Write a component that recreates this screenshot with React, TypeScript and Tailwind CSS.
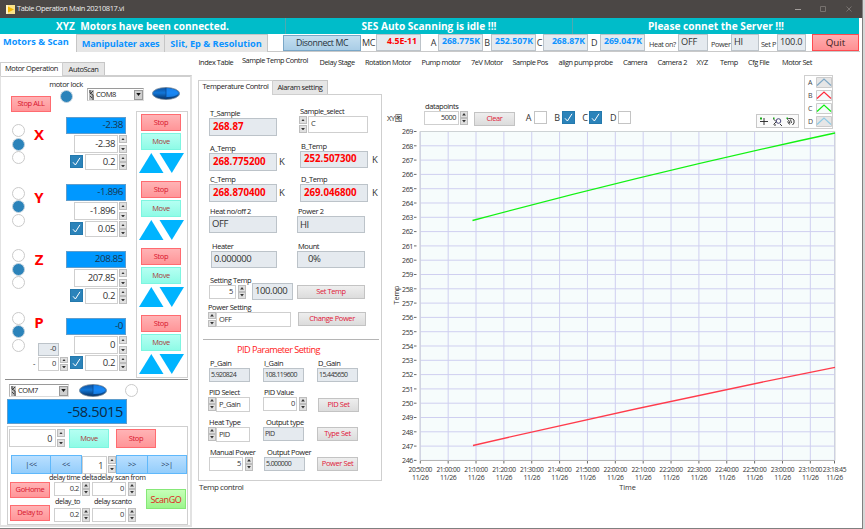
import type { ReactNode } from "react";
import clsx from "clsx";

const menu = [
  { name: "Index Table", w: "w-[43.5px]" },
  { name: "Sample Temp Control", w: "w-[77.5px] -mt-0.5" },
  { name: "Delay Stage", w: "w-[45.5px]" },
  { name: "Rotation Motor", w: "w-[56.5px]" },
  { name: "Pump motor", w: "w-[49.5px]" },
  { name: "7eV Motor", w: "w-[41.5px]" },
  { name: "Sample Pos", w: "w-[46px]" },
  { name: "align pump probe", w: "w-[64.5px]" },
  { name: "Camera", w: "w-[34.5px]" },
  { name: "Camera 2", w: "w-[39px]" },
  { name: "XYZ", w: "w-[23.5px]" },
  { name: "Temp", w: "w-[28px]" },
  { name: "Cfg File", w: "w-[34px]" },
  { name: "Motor Set", w: "w-[34px]" },
];

const axes = [
  { name: "X", pos: "-2.38", target: "-2.38", step: "0.2" },
  { name: "Y", pos: "-1.896", target: "-1.896", step: "0.05" },
  { name: "Z", pos: "208.85", target: "207.85", step: "0.2" },
  { name: "P", pos: "-0", target: "0", step: "0.2" },
];

const times = [
  "20:50:00", "21:00:00", "21:10:00", "21:20:00", "21:30:00", "21:40:00", "21:50:00", "22:00:00",
  "22:10:00", "22:20:00", "22:30:00", "22:40:00", "22:50:00", "23:00:00", "23:10:00",
];

const tones = {
  red: "border-[#ff6b70] bg-linear-to-b from-[#ffb3b5] to-[#ff9598] text-[#d8142c]",
  mint: "border-[#7df5e0] bg-linear-to-b from-[#b4fff2] to-[#8efbe6] text-[#a83a3a]",
  gray: "border-[#c3c3c3] bg-linear-to-b from-[#eeeeee] to-[#dcdcdc] text-[#e01838]",
  blue: "border-[#5fb8fb] bg-linear-to-b from-[#b9dfff] to-[#93cdfb] text-[#1d3557]",
  green: "border-[#86e878] bg-linear-to-b from-[#c6ffb8] to-[#9cf58c] text-[#e02020]",
};

function Btn({ tone, className, children }: { tone: keyof typeof tones; className?: string; children: ReactNode }) {
  return (
    <button className={clsx("flex items-center justify-center border text-[7.5px] leading-none", tones[tone], className)}>
      {children}
    </button>
  );
}

function Spinner({ className }: { className?: string }) {
  return (
    <div className={clsx("flex w-2 flex-col justify-between", className)}>
      {["M0 4 3 0 6 4Z", "M0 0 3 4 6 0Z"].map((d) => (
        <div key={d} className="flex h-[47%] items-center justify-center border border-[#bdbdbd] bg-[#e0e0e0]">
          <svg viewBox="0 0 6 4" className="h-[2.5px] w-1">
            <path d={d} fill="#333" />
          </svg>
        </div>
      ))}
    </div>
  );
}

// editable value
function Input({ className, children }: { className?: string; children: ReactNode }) {
  return (
    <div className={clsx("flex items-center border border-[#cfcfcf] bg-white leading-none text-[#333]", className)}>{children}</div>
  );
}

// read only value
function Readout({ className, children }: { className?: string; children: ReactNode }) {
  return (
    <div className={clsx("flex items-center border border-[#bcc3c9] bg-[#e5eaef] leading-none", className)}>{children}</div>
  );
}

function Check({ on, className }: { on?: boolean; className?: string }) {
  return (
    <div className={clsx("size-[13px] border", on ? "border-[#2479ad] bg-[#2b83ba]" : "border-[#c4c4c4] bg-white", className)}>
      {on && (
        <svg viewBox="0 0 11 11" className="size-full">
          <path d="M2 6.3 4.4 9 9 1.8" fill="none" stroke="#fff" strokeWidth="1" />
        </svg>
      )}
    </div>
  );
}

function Led({ on, className }: { on?: boolean; className?: string }) {
  return (
    <div className={clsx("size-[13px] rounded-full border", on ? "border-[#c3d3de] bg-[#2b83ba]" : "border-[#cacaca] bg-white", className)} />
  );
}

function Oval({ className }: { className?: string }) {
  return (
    <svg viewBox="0 0 28 13" className={clsx("h-[13px] w-7", className)}>
      <defs>
        <linearGradient id="oval" x1="0" x2="0" y1="0" y2="1">
          <stop offset="0" stopColor="#0d4f9c" />
          <stop offset=".45" stopColor="#1277d8" />
          <stop offset="1" stopColor="#062c5c" />
        </linearGradient>
      </defs>
      <ellipse cx="14" cy="6.5" rx="13.6" ry="6" fill="url(#oval)" stroke="#7c8b99" strokeWidth=".8" />
      <path d="M14 1.2C21 1.2 26 3.5 26 6S21 10 14 10Z" fill="#1b8dff" opacity=".75" />
      <path d="M14 .8v11.4" stroke="#0a4a92" strokeWidth=".8" />
    </svg>
  );
}

function Combo({ className, children }: { className?: string; children: ReactNode }) {
  return (
    <div className={clsx("flex h-[13px] items-center border border-t-[#9a9a9a] border-r-[#dcdcdc] border-b-[#dcdcdc] border-l-[#b5b5b5] bg-white text-[7.5px] leading-none text-[#222]", className)}>
      <svg viewBox="0 0 5 10" className="ml-px h-2.5 w-[5px]">
        <path d="M0 0h5v10H0z" fill="#b9b9b9" />
        <path d="M1 0v3l3 2v5M4 1 1 4M1 6l2 2" fill="none" stroke="#333" strokeWidth=".9" />
      </svg>
      <span className="ml-0.5 flex-1">{children}</span>
      <div className="flex h-[10px] w-[9px] items-center justify-center border border-[#999] bg-[#cfcfcf]">
        <svg viewBox="0 0 6 4" className="h-[3px] w-[5px]">
          <path d="M0 0h6L3 4Z" fill="#111" />
        </svg>
      </div>
    </div>
  );
}

function Field({ label, className, indent, children }: { label: string; className?: string; indent?: string; children: ReactNode }) {
  return (
    <div className={className}>
      <div className={clsx("h-2.5 text-[7.5px] leading-[10px] text-[#222]", indent)}>{label}</div>
      <div className="flex">{children}</div>
    </div>
  );
}

function TitleBar() {
  return (
    <div className="flex h-[18px] items-center bg-[#4b4745] text-[8px] text-[#eee]">
      <svg viewBox="0 0 9 9" className="ml-1.5 size-[9px]">
        <path d="M0 0h9v9H0z" fill="#fbe38a" />
        <path d="M2 1.5 8 4.5 2 7.5Z" fill="#f5b800" />
        <path d="M0 0h2v9H0z" fill="#fff3c4" />
      </svg>
      <span className="ml-0.5 flex-1 text-[7.5px]">Table Operation Main 20210817.vi</span>
      <svg viewBox="0 0 60 8" className="mr-[10px] h-2 w-[60px]" fill="none" stroke="#77726f">
        <path d="M3 4.500h6" stroke="#a39e9b" />
        <path d="M28.500 1.500h5v5h-5z" />
        <path d="m54.500 1.500 5 5m0-5-5 5" />
      </svg>
    </div>
  );
}

function Banner() {
  return (
    <div className="mr-[3px] flex h-4 bg-[#00bcc9] text-center text-[10.1px] leading-4 font-bold tracking-normal text-white">
      <div className="w-[286px] border-r border-[#4fa9b0]">XYZ&nbsp; Motors have been connected.</div>
      <div className="w-[287px] border-r border-[#4fa9b0]">SES Auto Scanning is idle !!!</div>
      <div className="w-[286px]">Please connet the Server !!!</div>
    </div>
  );
}

function TopRow() {
  const temp = "h-[17px] w-[45px] justify-end pr-0.5 pb-0.5 text-[8.7px] font-bold tracking-normal text-[#0c93ff]";
  const label = "text-center text-[9px] leading-[18px] text-[#333]";
  const value = "h-[17px] pb-px text-[9.2px] tracking-[-0.2px] text-[#333]";
  const tab = "border border-b-0 border-[#c6c6c6] bg-[#e6e6e6] text-center leading-[17px]";
  return (
    <div className="flex h-[18px]">
      <div className="flex text-[9.2px] font-bold tracking-normal text-[#0c93ff]">
        <div className="w-[76px] pl-[3px] leading-[16px]">Motors &amp; Scan</div>
        <div className={clsx(tab, "w-[89px] tracking-[-0.15px]")}>Manipulater axes</div>
        <div className={clsx(tab, "w-[103px] border-l-0")}>Slit, Ep &amp; Resolution</div>
      </div>
      <div className="flex w-[592px] border-b border-[#c9c9c9]">
        <div className="mt-px ml-[15px] h-4 w-[78px] border border-[#7aa7c7] bg-linear-to-b from-[#c5dff0] to-[#a9cde6] text-center text-[8.8px] leading-[14px] text-[#26323c]">
          Disonnect MC
        </div>
        <span className={clsx(label, "w-[15px]")}>MC</span>
        <Readout className="h-[17px] w-[45px] justify-end pr-[3px] pb-0.5 text-[8.7px] font-bold tracking-normal text-[#ff0000]">4.5E-11</Readout>
        <span className={clsx(label, "w-[17px] pl-2")}>A</span>
        <Readout className={temp}>268.775K</Readout>
        <span className={clsx(label, "w-2")}>B</span>
        <Readout className={temp}>252.507K</Readout>
        <span className={clsx(label, "w-[7px]")}>C</span>
        <Readout className={temp}>268.87K</Readout>
        <span className={clsx(label, "w-3")}>D</span>
        <Readout className={temp}>269.047K</Readout>
        <span className="w-[33px] pl-1 text-[7.3px] leading-[21px] text-[#333]">Heat on?</span>
        <Readout className={clsx(value, "w-[30px] pl-0.5")}>OFF</Readout>
        <span className="w-[23px] pl-[3px] text-[7.3px] leading-[20px] text-[#333]">Power</span>
        <Readout className={clsx(value, "w-7 pl-0.5")}>HI</Readout>
        <span className="w-[18px] pl-0.5 text-[7.3px] leading-[20px] text-[#333]">Set P</span>
        <Readout className={clsx(value, "w-[29px] pl-0.5")}>100.0</Readout>
        <div className="ml-[6px] h-[17px] w-[47px] border border-[#ff4a4f] bg-linear-to-b from-[#ffaeb0] to-[#ff9093] text-center text-[9.8px] leading-[15px] tracking-normal text-[#3a2020]">
          Quit
        </div>
      </div>
    </div>
  );
}

function Leds() {
  return (
    <div className="flex flex-col gap-[0.5px]">
      <Led />
      <Led on />
      <Led />
    </div>
  );
}

function AxisValues({ pos, target, step }: { pos: string; target: string; step: string }) {
  return (
    <div className="h-[67px]">
      <div className="flex h-[17px] w-[60px] items-center justify-end border border-[#5f9dcc] bg-[#0098ff] pr-0.5 pb-px text-[9.8px] leading-none text-[#17364f]">
        {pos}
      </div>
      <div className="flex pt-px pl-2">
        <Input className="h-[18px] w-11 justify-end pr-0.5 text-[9.5px]">{target}</Input>
        <Spinner className="ml-px h-[18px]" />
      </div>
      <div className="flex pt-px pl-1">
        <Check on className="mt-px" />
        <Input className="ml-0.5 h-4 w-[33px] justify-end pr-0.5 text-[9.5px]">{step}</Input>
        <Spinner className="ml-px h-4" />
      </div>
    </div>
  );
}

function MotorPanel() {
  return (
    <div className="w-[192px]">
      <div className="mt-2.5 flex h-[13px] text-center text-[7.5px] text-[#222]">
        <div className="h-[14px] w-[63px] border border-b-0 border-[#cfcfcf] bg-white leading-[11px]">Motor Operation</div>
        <div className="w-[42px] border border-b-0 border-l-0 border-[#c6c6c6] bg-[#e6e6e6] leading-[13px]">AutoScan</div>
      </div>
      <div className="h-[452px] border-2 border-l border-[#e2e2e2] border-t-[#cfcfcf]">
        <div className="flex h-[34px]">
          <Btn tone="red" className="mt-[19px] ml-2.5 h-4 w-10">Stop ALL</Btn>
          <div className="-ml-0.5 flex w-[34px] flex-col items-center pt-0.5">
            <span className="text-[7.5px] leading-[11px]">motor lock</span>
            <Led on />
          </div>
          <Combo className="mt-[11px] ml-1 w-[57px]">COM8</Combo>
          <Oval className="mt-[10px] ml-2" />
        </div>
        <div className="flex h-[268px]">
          <div className="flex w-[65px] flex-col gap-[22.5px] pt-[13px] pl-[11px]">
            {axes.map((a) => (
              <div key={a.name} className="flex h-10">
                <Leds />
                <span className="ml-2 w-3 text-center text-[15px] leading-[21px] font-bold tracking-normal text-[#ff0000]">{a.name}</span>
                {a.name === "P" && (
                  <div className="-ml-[7px] pt-[31px] text-[7.5px]">
                    <Readout className="h-[13px] w-[21px] justify-end pr-0.5 text-[#333]">-0</Readout>
                    <div className="-ml-[5px] flex pt-px">
                      <span className="w-[5px] leading-[13px]">-</span>
                      <Input className="h-[14px] w-[21px] justify-end pr-0.5">0</Input>
                      <Spinner className="ml-px h-[14px]" />
                    </div>
                  </div>
                )}
              </div>
            ))}
          </div>
          <div className="w-[70px] pt-1.5">
            {axes.map((a) => (
              <AxisValues key={a.name} pos={a.pos} target={a.target} step={a.step} />
            ))}
          </div>
          <div className="h-[267px] w-[52px] border border-[#d2d2d2]">
            {axes.map((a) => (
              <div key={a.name} className="h-[67px] pt-0.5 pl-1">
                <Btn tone="red" className="h-[17px] w-10">Stop</Btn>
                <Btn tone="mint" className="mt-0.5 h-[17px] w-10">Move</Btn>
                <svg viewBox="0 0 46 20" className="mt-[3px] -ml-0.5 h-5 w-[46px]" fill="#00b4ff">
                  <path d="M12.300 0 24.500 20H0Z" />
                  <path d="M20.500 0H45L32.800 20Z" />
                </svg>
              </div>
            ))}
          </div>
        </div>
        <div className="ml-1 h-px w-[183px] bg-[#8c8c8c]" />
        <div className="flex h-[19px] pt-1">
          <Combo className="ml-2 w-[60px]">COM7</Combo>
          <Oval className="ml-2.5" />
          <Led className="ml-[18px]" />
        </div>
        <div className="ml-[6px] flex h-[25px] w-[120px] items-center justify-end border border-[#5f9dcc] bg-[#0098ff] pr-[3px] text-[14.6px] leading-none text-[#0d2a45]">
          -58.5015
        </div>
        <div className="mt-0.5 ml-1.5 h-[99px] w-[181px] border border-[#cfcfcf]">
          <div className="flex pt-0.5 pl-px">
            <Input className="h-[18px] w-[47px] justify-end pr-[3px] text-[9px]">0</Input>
            <Spinner className="ml-px h-[18px]" />
            <Btn tone="mint" className="ml-1 h-[19px] w-10">Move</Btn>
            <Btn tone="red" className="ml-[7px] h-[19px] w-10">Stop</Btn>
          </div>
          <div className="mt-[7px] flex h-5 pl-[3px]">
            <Btn tone="blue" className="h-[19px] w-10">|&lt;&lt;</Btn>
            <Btn tone="blue" className="-ml-px h-[19px] w-8">&lt;&lt;</Btn>
            <Input className="mt-px h-[18px] w-[25px] justify-end pr-[3px] text-[9px]">1</Input>
            <Spinner className="mt-px ml-px h-[17px]" />
            <Btn tone="blue" className="h-[19px] w-8">&gt;&gt;</Btn>
            <Btn tone="blue" className="-ml-px h-[19px] w-[40px]">&gt;&gt;|</Btn>
          </div>
          <div className="flex">
            <div className="w-[137px] text-[7.3px]">
              <div className="flex h-[7px] pl-[41px] leading-[4px]">
                <span className="w-[48.5px]">delay time delta</span>
                <span>delay scan from</span>
              </div>
              <div className="flex pl-0.5">
                <Btn tone="red" className="h-4 w-10">GoHome</Btn>
                <Input className="ml-1 h-[14px] w-[27px] justify-end pr-px text-[7.5px]">0.2</Input>
                <Spinner className="ml-px h-[14px]" />
                <Input className="ml-0.5 h-[14px] w-[34px] justify-end pr-px text-[7.5px]">0</Input>
                <Spinner className="ml-0.5 h-[14px]" />
              </div>
              <div className="flex h-[7px] pl-[47px] leading-[7px]">
                <span className="w-[39px]">delay_to</span>
                <span>delay scanto</span>
              </div>
              <div className="flex pl-0.5">
                <Btn tone="red" className="h-4 w-10">Delay to</Btn>
                <Input className="mt-[3px] ml-1 h-[14px] w-[27px] justify-end pr-px text-[7.5px]">0.2</Input>
                <Spinner className="mt-[3px] ml-px h-[14px]" />
                <Input className="mt-[3px] ml-0.5 h-[14px] w-[34px] justify-end pr-px text-[7.5px]">0</Input>
                <Spinner className="mt-[3px] ml-0.5 h-[14px]" />
              </div>
            </div>
            <Btn tone="green" className="mt-[14px] ml-px h-5 w-10">
              <span className="text-[9px]">ScanGO</span>
            </Btn>
          </div>
        </div>
      </div>
    </div>
  );
}

function TempPanel() {
  const big = "w-[68px] pl-[3px] text-[9.7px] font-bold tracking-normal text-[#ff0000]";
  const plain = "h-[17px] pl-0.5 text-[9.5px] text-[#333]";
  const small = "h-[14px] w-[41px] pb-0.5 pl-px text-[7px] tracking-[-0.6px] text-[#333]";
  const kelvin = "ml-0.5 text-[9.5px] leading-[18px] text-[#333]";
  return (
    <div className="w-[184px]">
      <div className="flex h-[14px] text-center text-[7.5px] text-[#222]">
        <div className="h-[15px] w-[75px] border border-b-0 border-[#cfcfcf] bg-white leading-[11px]">Temperature Control</div>
        <div className="w-[55px] border border-b-0 border-l-0 border-[#c6c6c6] bg-[#e6e6e6] leading-[13px]">Alaram setting</div>
      </div>
      <div className="h-[387px] border border-[#cfcfcf]">
        <div className="flex h-[244px]">
          <div className="w-[98px] pl-2.5">
            <Field label="T_Sample" className="mt-[13px]" indent="pl-px">
              <Readout className={clsx(big, "h-[18px]")}>268.87</Readout>
            </Field>
            <Field label="A_Temp" className="mt-[7px]" indent="pl-px">
              <Readout className={clsx(big, "h-[18px]")}>268.775200</Readout>
              <span className={kelvin}>K</span>
            </Field>
            <Field label="C_Temp" className="mt-[3px]" indent="pl-px">
              <Readout className={clsx(big, "h-[18px] pb-px")}>268.870400</Readout>
              <span className={kelvin}>K</span>
            </Field>
            <Field label="Heat no/off 2" className="mt-1" indent="pl-px">
              <Readout className={clsx(plain, "w-[68px] pb-px")}>OFF</Readout>
            </Field>
            <Field label="Heater" className="mt-2" indent="pl-[3px]">
              <Readout className={clsx(plain, "ml-0.5 w-[66px] pb-px")}>0.000000</Readout>
            </Field>
            <Field label="Setting Temp" className="mt-[7px]" indent="pl-px">
              <Input className="h-[14px] w-[27px] justify-end pr-0.5 text-[7.5px]">5</Input>
              <Spinner className="ml-0.5 h-[14px]" />
              <Readout className="-mt-0.5 ml-1.5 h-[17px] w-[41px] pb-px pl-0.5 text-[9.5px] text-[#333]">100.000</Readout>
            </Field>
            <Field label="Power Setting" className="mt-0.5 -ml-px">
              <Spinner className="h-[15px]" />
              <Input className="h-[15px] w-[75px] pl-0.5 text-[7.5px]">OFF</Input>
            </Field>
          </div>
          <div className="w-[84px]">
            <Field label="Sample_select" className="mt-[11px] ml-0.5" indent="pl-px">
              <Spinner className="h-[17px]" />
              <Input className="ml-px h-[17px] w-[60px] pb-0.5 pl-0.5 text-[7.5px]">C</Input>
            </Field>
            <Field label="B_Temp" className="mt-2 ml-[3px]" indent="pl-px">
              <Readout className={clsx(big, "h-[17px] pb-px pl-[2px]")}>252.507300</Readout>
              <span className={clsx(kelvin, "pl-0.5")}>K</span>
            </Field>
            <Field label="D_Temp" className="mt-[5px] ml-[3px]" indent="pl-px">
              <Readout className={clsx(big, "h-[18px] pb-px pl-[2px]")}>269.046800</Readout>
              <span className={clsx(kelvin, "pl-0.5")}>K</span>
            </Field>
            <Field label="Power 2" className="mt-1" indent="pl-px">
              <Readout className={clsx(plain, "w-[68px]")}>HI</Readout>
            </Field>
            <Field label="Mount" className="mt-2" indent="pl-px">
              <Readout className="h-[17px] w-[68px] pb-px pl-2.5 text-[9.5px] text-[#333]">0%</Readout>
            </Field>
            <Btn tone="gray" className="mt-[17px] h-[14px] w-[68px]">Set Temp</Btn>
            <Btn tone="gray" className="mt-[13px] ml-px h-[14px] w-[68px]">Change Power</Btn>
          </div>
        </div>
        <div className="ml-1 h-px w-[176px] bg-[#b5b5b5]" />
        <div className="mt-1 ml-[38px] text-[9.2px] leading-3 tracking-[-0.55px] text-[#ff1a1a]">PID Parameter Setting</div>
        <div className="mt-0.5 ml-2.5 grid grid-cols-[54px_54px_42px] gap-y-[5px]">
          <Field label="P_Gain" indent="pl-px">
            <Readout className={small}>5.920824</Readout>
          </Field>
          <Field label="I_Gain" indent="pl-px">
            <Readout className={small}>108.119600</Readout>
          </Field>
          <Field label="D_Gain" indent="pl-px">
            <Readout className={small}>15.445650</Readout>
          </Field>
          <Field label="PID Select">
            <Spinner className="-ml-px h-[14px]" />
            <Input className="h-[15px] w-[34px] pl-0.5 text-[7.5px]">P_Gain</Input>
          </Field>
          <Field label="PID Value" indent="pl-px">
            <Input className="h-[14px] w-[34px] justify-end pr-px text-[7.5px]">0</Input>
            <Spinner className="ml-0.5 h-[14px]" />
          </Field>
          <Btn tone="gray" className="mt-[11px] ml-px h-[14px] w-[41px]">PID Set</Btn>
          <Field label="Heat Type">
            <Spinner className="-ml-px h-[14px]" />
            <Input className="h-[15px] w-[34px] pl-0.5 text-[7.5px]">PID</Input>
          </Field>
          <Field label="Output type" indent="pl-[3px]">
            <Readout className={small}>PID</Readout>
          </Field>
          <Btn tone="gray" className="mt-2.5 h-[14px] w-[41px]">Type Set</Btn>
          <Field label="Manual Power" indent="pl-px">
            <Input className="h-[14px] w-[34px] justify-end pr-px text-[7.5px]">5</Input>
            <Spinner className="ml-0.5 h-[14px]" />
          </Field>
          <Field label="Output Power" indent="pl-1">
            <Readout className={clsx(small, "ml-px")}>5.000000</Readout>
          </Field>
          <Btn tone="gray" className="mt-2.5 h-[14px] w-[41px]">Power Set</Btn>
        </div>
      </div>
      <div className="pl-px text-[8px] leading-[12px] tracking-[-0.45px] text-[#333]">Temp control</div>
    </div>
  );
}

function GraphTools() {
  const letter = "text-center text-[9px] leading-[14px] text-[#333]";
  const plots = [
    { name: "A", color: "#7fa8c6", bg: "#e6e6e6" },
    { name: "B", color: "#ff2a3a", bg: "#f6fbfb" },
    { name: "C", color: "#10f010", bg: "#f6fbfb" },
    { name: "D", color: "#8fcbe6", bg: "#e6e6e6" },
  ];
  return (
    <div className="flex h-[54px]">
      <span className="mt-[37px] ml-[5px] w-[37px] text-[7.5px] leading-[12px]">XY图</span>
      <Field label="datapoints" className="mt-[26px] w-[50px]" indent="pl-px">
        <Input className="h-[14px] w-[35px] justify-end pr-0.5 text-[7.3px]">5000</Input>
        <Spinner className="ml-px h-[14px]" />
      </Field>
      <Btn tone="gray" className="mt-[37px] h-[14px] w-[41px]">Clear</Btn>
      <div className="mt-[36px] flex w-[239px] pl-[9px]">
        <span className={clsx(letter, "w-[9px]")}>A</span>
        <Check className="ml-px" />
        <span className={clsx(letter, "ml-[6px] w-[8px]")}>B</span>
        <Check on className="ml-px" />
        <span className={clsx(letter, "ml-[6px] w-[8px]")}>C</span>
        <Check on />
        <span className={clsx(letter, "ml-[7px] w-[8px]")}>D</span>
        <Check className="ml-px" />
      </div>
      <div className="mt-[39px] ml-[2px] h-[14px] w-[43px] border border-[#c8c8c8] bg-[#fafafa]">
        <svg viewBox="0 0 41 12" className="h-3 w-[41px]" fill="none" stroke="#222" strokeWidth=".9">
          <path d="M3 6.500h8M7 3v7" />
          <path d="M16.500 9.500 19 7M16.500 4l2.500 2.500M17 10h2M23 9l2 2" />
          <circle cx="21.500" cy="6" r="2.300" stroke="#33336a" />
          <path d="M30 4.500c1-1.500 6-1.500 7 .5v3l-1.500 2M31.500 5l1.500 3.500M33.500 4.500l1 3.500M30.500 6.500l2 3" />
          <path d="M3 2.500h2v2H3zM16 2.500h1.500V4H16zM29.500 2.500h1.500V4h-1.500z" fill="#19a819" stroke="none" />
        </svg>
      </div>
      <div className="ml-[5px] flex h-[54px] w-[29px] flex-col border border-[#cfcfcf] bg-white pl-[3px]">
        {plots.map((p) => (
          <div key={p.name} className="flex h-[13px] items-center">
            <span className="w-2 text-[7px] leading-none text-[#444]">{p.name}</span>
            <svg viewBox="0 0 16 11" className="h-[11px] w-4">
              <path d="M.5.5h15v10H.5z" fill={p.bg} stroke="#cccccc" />
              <path d="M1 8.500 8 2l7 6.500" fill="none" stroke={p.color} strokeWidth="1.200" />
            </svg>
          </div>
        ))}
      </div>
    </div>
  );
}

function Graph() {
  const step = 27.86;
  const ticks = times.map((t, i) => ({ t, x: 38.3 + i * step }));
  ticks.push({ t: "23:18:45", x: 452.5 });
  const rows = Array.from({ length: 24 }, (_, i) => ({ v: 269 - i, y: 5.5 + i * 14.3 }));
  return (
    <svg viewBox="0 3 480 370" className="h-[370px] w-[480px] overflow-visible" fontSize="7.300" fill="#333">
      <path d="M38 5h415v329.500H38z" fill="#f6fcfc" />
      <g stroke="#cfcff0" strokeWidth="1">
        {ticks.map((k) => (
          <path key={k.t} d={`M${k.x} 5v329`} />
        ))}
        {rows.map((r) => (
          <path key={r.v} d={`M38 ${r.y}h415`} />
        ))}
      </g>
      <path d="M38 334.500V5.500h415v329" fill="none" stroke="#cdd2d4" />
      <path d="M38 334.500h415" stroke="#b5b5b5" />
      <path d="M90.500 94.500Q270 46.500 453 7" fill="none" stroke="#12f212" strokeWidth="1.300" />
      <path d="M91 319.500Q270 278 453 241.300" fill="none" stroke="#ff3b4b" strokeWidth="1.300" />
      {rows.map((r) => (
        <g key={r.v}>
          <path d={`M32 ${r.y}h2.500`} stroke="#444" strokeWidth=".8" />
          <text x="31" y={r.y + 2.8} textAnchor="end" textLength="11" lengthAdjust="spacingAndGlyphs">{r.v}</text>
        </g>
      ))}
      {ticks.map((k) => (
        <g key={k.t} textAnchor="middle">
          <path d={`M${k.x} 335v2.500`} stroke="#444" strokeWidth=".8" />
          <text x={k.x} y="345.500" textLength="23.500" lengthAdjust="spacingAndGlyphs">{k.t}</text>
          <text x={k.x} y="354" textLength="16.500" lengthAdjust="spacingAndGlyphs">11/26</text>
        </g>
      ))}
      <text x="245.500" y="363.500" textAnchor="middle" letterSpacing="-.1">Time</text>
      <text transform="translate(16.500 169) rotate(-90)" textAnchor="middle" letterSpacing="-.1">Temp</text>
    </svg>
  );
}

export default function App() {
  return (
    <div className="flex h-[529px] w-[865px] overflow-hidden bg-white font-['Open_Sans','Noto_Sans_CJK_SC',sans-serif] tracking-[-0.4px] whitespace-nowrap text-[#222] [&_*]:shrink-0">
      <div className="h-[529px] w-[863px] border-r border-b border-[#808080]">
        <TitleBar />
        <Banner />
        <TopRow />
        <div className="flex">
          <MotorPanel />
          <div className="w-[670px] pl-1.5">
            <div className="mt-1 flex h-[19px] pt-px pl-[0.5px] text-[7.4px] leading-[11px] tracking-[-0.45px]">
              {menu.map((m) => (
                <span key={m.name} className={m.w}>{m.name}</span>
              ))}
            </div>
            <div className="flex">
              <div className="pt-[5px]">
                <TempPanel />
              </div>
              <div>
                <GraphTools />
                <Graph />
              </div>
            </div>
          </div>
        </div>
      </div>
      <div className="h-full w-0.5 bg-[#d6d6d6]" />
    </div>
  );
}
